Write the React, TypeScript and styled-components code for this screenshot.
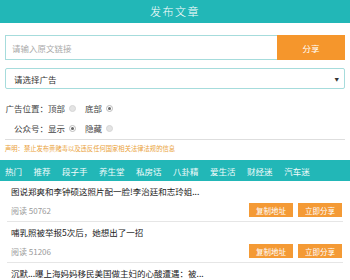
import styled, { createGlobalStyle } from "styled-components";

const GlobalStyle = createGlobalStyle`
  html, body {
    margin: 0;
    padding: 0;
    background: #fff;
  }
  body {
    font-family: "Noto Sans CJK SC", "Noto Sans", sans-serif;
    color: #333;
  }
`;

const TEAL = "#22b7b7";
const ORANGE = "#f5962c";

const Header = styled.div`
  height: 23px;
  line-height: 23px;
  background: ${TEAL};
  color: #fff;
  text-align: center;
  font-size: 11px;
  font-weight: 300;
  letter-spacing: 1.5px;
`;

const Form = styled.div`
  padding: 12px 5px 0;
`;

const InputRow = styled.div`
  display: flex;
  height: 25px;
`;

const LinkInput = styled.div`
  flex: 1;
  border: 1px solid #a6dcdc;
  border-right: none;
  display: flex;
  align-items: center;
  padding-left: 6px;
  font-size: 8.5px;
  color: #aaa;
`;

const ShareButton = styled.div`
  width: 68px;
  background: ${ORANGE};
  color: #fff;
  font-size: 8.5px;
  display: flex;
  align-items: center;
  justify-content: center;
`;

const Select = styled.div`
  margin-top: 8px;
  height: 21px;
  box-sizing: border-box;
  border: 1px solid #a6dcdc;
  border-radius: 2px;
  display: flex;
  align-items: center;
  justify-content: space-between;
  padding: 0 5px 0 8px;
  font-size: 8.5px;
  color: #333;
`;

const Arrow = styled.span`
  font-size: 4.5px;
  color: #333;
`;

const Options = styled.div`
  margin-top: 9px;
  display: flex;
  flex-direction: column;
`;

const OptionRow = styled.div`
  display: flex;
  align-items: center;
  height: 20px;
  font-size: 8.5px;
  color: #444;
`;

const OptionLabel = styled.span`
  width: 43px;
  text-align: right;
`;

const Choice = styled.span`
  display: flex;
  align-items: center;
  margin-right: 9px;
`;

const Radio = styled.span<{ $checked?: boolean }>`
  width: 5px;
  height: 5px;
  margin-left: 4px;
  border-radius: 50%;
  border: 1px solid ${(p) => (p.$checked ? "#bbb" : "#d6d6d6")};
  background: ${(p) => (p.$checked ? "#fff" : "#e4e4e4")};
  display: flex;
  align-items: center;
  justify-content: center;
  &::after {
    content: "";
    width: 3px;
    height: 3px;
    border-radius: 50%;
    background: ${(p) => (p.$checked ? "#666" : "transparent")};
  }
`;

const Divider = styled.div`
  margin-top: 1px;
  height: 1px;
  background: #dedede;
`;

const Notice = styled.div`
  height: 20px;
  line-height: 18px;
  font-size: 6.3px;
  color: #eaa23a;
`;

const Tabs = styled.div`
  height: 21px;
  background: ${TEAL};
  display: flex;
  align-items: center;
  padding-left: 5px;
  gap: 11.5px;
  overflow: hidden;
  white-space: nowrap;
`;

const Tab = styled.span`
  font-size: 8.5px;
  color: #f2fbfb;
`;

const List = styled.div`
  margin: 0 7px;
`;

const Item = styled.div`
  padding: 3px 0 4px;
  border-bottom: 1px solid #e6e6e6;
`;

const Title = styled.div`
  padding-left: 4px;
  height: 14px;
  line-height: 14px;
  font-size: 8.5px;
  color: #222;
  white-space: nowrap;
  overflow: hidden;
`;

const Meta = styled.div`
  margin-top: 5px;
  display: flex;
  align-items: center;
  height: 14px;
  padding-left: 4px;
  padding-right: 1px;
`;

const Reads = styled.span`
  flex: 1;
  font-size: 8px;
  color: #999;
`;

const SmallButton = styled.span`
  width: 44px;
  height: 14px;
  margin-left: 5px;
  background: #f49a35;
  color: #fff;
  font-size: 7.5px;
  display: flex;
  align-items: center;
  justify-content: center;
`;

const tabs = ["热门", "推荐", "段子手", "养生堂", "私房话", "八卦精", "爱生活", "财经迷", "汽车迷"];

const articles = [
  { title: "图说郑爽和李钟硕这照片配一脸!李治廷和志玲姐...", reads: 50762 },
  { title: "哺乳照被举报5次后，她想出了一招", reads: 51206 },
  { title: "沉默...曝上海妈妈移民美国做主妇的心酸遭遇：被...", reads: 49871 },
];

export default function App() {
  return (
    <>
      <GlobalStyle />
      <Header>发布文章</Header>
      <Form>
        <InputRow>
          <LinkInput>请输入原文链接</LinkInput>
          <ShareButton>分享</ShareButton>
        </InputRow>
        <Select>
          <span>请选择广告</span>
          <Arrow>▼</Arrow>
        </Select>
        <Options>
          <OptionRow>
            <OptionLabel>广告位置：</OptionLabel>
            <Choice>
              顶部
              <Radio />
            </Choice>
            <Choice>
              底部
              <Radio $checked />
            </Choice>
          </OptionRow>
          <OptionRow>
            <OptionLabel>公众号：</OptionLabel>
            <Choice>
              显示
              <Radio $checked />
            </Choice>
            <Choice>
              隐藏
              <Radio />
            </Choice>
          </OptionRow>
        </Options>
        <Divider />
        <Notice>声明：禁止发布黄赌毒以及违反任何国家相关法律法规的信息</Notice>
      </Form>
      <Tabs>
        {tabs.map((t) => (
          <Tab key={t}>{t}</Tab>
        ))}
      </Tabs>
      <List>
        {articles.map((a) => (
          <Item key={a.reads}>
            <Title>{a.title}</Title>
            <Meta>
              <Reads>阅读 {a.reads}</Reads>
              <SmallButton>复制地址</SmallButton>
              <SmallButton>立即分享</SmallButton>
            </Meta>
          </Item>
        ))}
      </List>
    </>
  );
}
